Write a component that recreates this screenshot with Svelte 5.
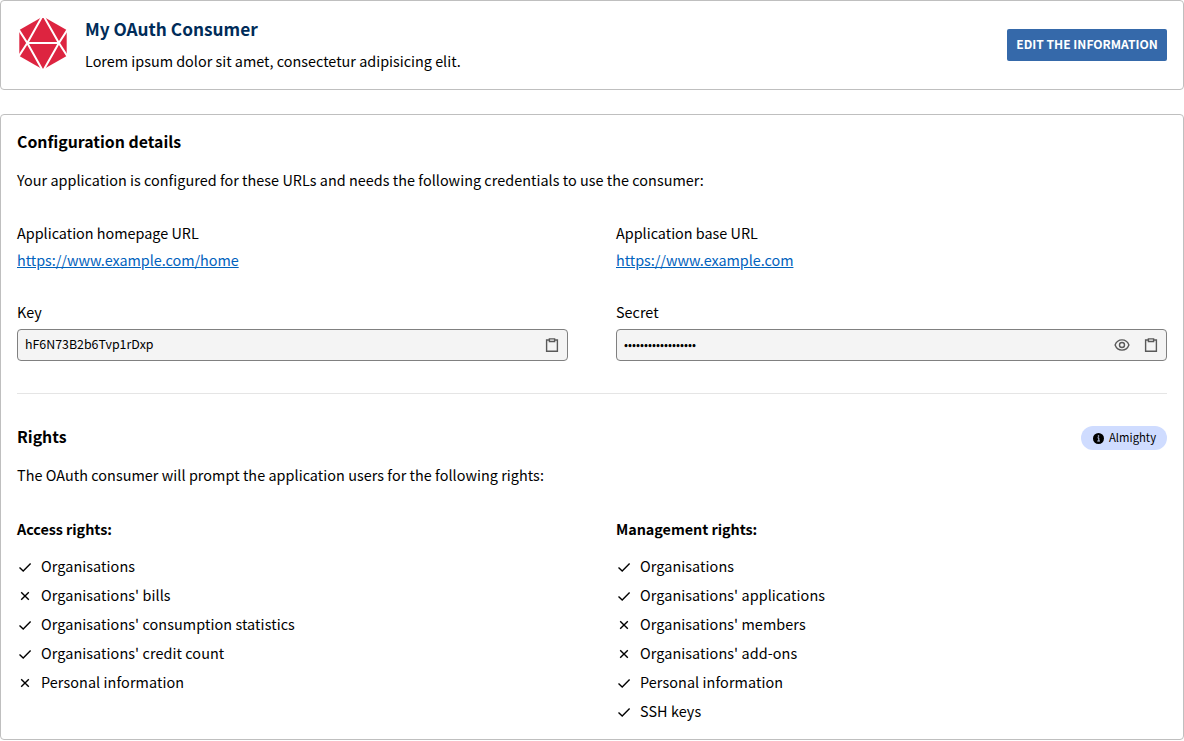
<script>
  const urls = [
    { label: 'Application homepage URL', href: 'https://www.example.com/home' },
    { label: 'Application base URL', href: 'https://www.example.com' },
  ];
  const rights = [
    {
      title: 'Access rights:',
      items: [
        ['Organisations', true],
        ["Organisations' bills", false],
        ["Organisations' consumption statistics", true],
        ["Organisations' credit count", true],
        ['Personal information', false],
      ],
    },
    {
      title: 'Management rights:',
      items: [
        ['Organisations', true],
        ["Organisations' applications", true],
        ["Organisations' members", false],
        ["Organisations' add-ons", false],
        ['Personal information', true],
        ['SSH keys', true],
      ],
    },
  ];
</script>

{#snippet clipboard()}
  <svg class="icon" viewBox="0 0 16 16" fill="none" stroke="#595959" stroke-width="1.4">
    <path d="M5.4 3H2.6v11.3h10.8V3h-2.8" />
    <path d="M5.4 1.9h5.2v2.6H5.4z" />
  </svg>
{/snippet}

<div class="page">
  <header class="card head">
    <svg class="logo" viewBox="0 0 48 52">
      <path fill="#dd2440" d="M24 -.5 47.7 13v26L24 52.5 .3 39V13z" />
      <path fill="none" stroke="#fff" stroke-width="2" d="M24 -2 8.3 26 24 54 39.9 26zM8.3 26h31.6M-1 11.5 8.3 26-1 40.5M49.2 11.5 39.9 26l9.3 14.5" />
    </svg>
    <div class="intro">
      <div class="name">My OAuth Consumer</div>
      <div class="desc">Lorem ipsum dolor sit amet, consectetur adipisicing elit.</div>
    </div>
    <button class="edit">EDIT THE INFORMATION</button>
  </header>

  <main class="card body">
    <h2>Configuration details</h2>
    <p>Your application is configured for these URLs and needs the following credentials to use the consumer:</p>
    <div class="cols urls">
      {#each urls as u}
        <div>
          <div class="line">{u.label}</div>
          <a href={u.href}>{u.href}</a>
        </div>
      {/each}
    </div>
    <div class="cols keys">
      <div>
        <div class="line">Key</div>
        <div class="field">
          <input type="text" readonly value="hF6N73B2b6Tvp1rDxp" aria-label="Key" />
          {@render clipboard()}
        </div>
      </div>
      <div>
        <div class="line">Secret</div>
        <div class="field">
          <input type="password" readonly value="aB3dE6gH9jK2mN5pQ8" aria-label="Secret" />
          <svg class="icon" viewBox="0 0 16 16" fill="none" stroke="#595959" stroke-width="1.4">
            <path d="M1.1 8C2.3 4.8 4.9 2.9 8 2.9S13.7 4.8 14.9 8C13.7 11.2 11.1 13.1 8 13.1S2.3 11.2 1.1 8z" />
            <circle cx="8" cy="8" r="2.5" />
          </svg>
          {@render clipboard()}
        </div>
      </div>
    </div>
    <hr />
    <div class="rhead">
      <h2>Rights</h2>
      <span class="badge">
        <svg viewBox="0 0 12 12">
          <circle cx="6.5" cy="6.5" r="5.5" />
          <path d="M5.5 5.8h1.3v3M5.3 9h2.6" fill="none" stroke="#cfdcff" stroke-width="1" />
          <circle cx="6.5" cy="4" r=".8" fill="#cfdcff" />
        </svg>
        <span class="tag">Almighty</span>
      </span>
    </div>
    <p>The OAuth consumer will prompt the application users for the following rights:</p>
    <div class="cols rights">
      {#each rights as group}
        <div>
          <h3>{group.title}</h3>
          <ul>
            {#each group.items as [label, granted]}
              <li>
                <svg class="icon" viewBox="0 0 16 16" fill="none" stroke="#000" stroke-width="1.4">
                  {#if granted}
                    <path d="M2.5 8.5 6.2 12 13.6 4.6" />
                  {:else}
                    <path d="M4.2 4.2 11.8 11.8M11.8 4.2 4.2 11.8" />
                  {/if}
                </svg>
                {label}
              </li>
            {/each}
          </ul>
        </div>
      {/each}
    </div>
  </main>
</div>

<style>
  :global(body) { background: #fff; }
  .page {
    display: flex; flex-direction: column; gap: 24px;
    font: 14.4px/24px "Noto Sans CJK JP", sans-serif; color: #000;
  }
  .card { box-sizing: border-box; border: 1px solid #bfbfbf; border-radius: 4px; padding: 0 16px; }
  .head { height: 90px; display: flex; align-items: center; }
  .logo { width: 48px; height: 52px; margin: 0 18px 4px 2px; }
  .intro { flex: 1; display: flex; flex-direction: column; gap: 8px; }
  .name { font-size: 17.25px; line-height: 24px; font-weight: 700; color: #002c59; }
  .edit {
    width: 160px; height: 32px; padding: 0 0 4px; border: 0; border-radius: 2px; white-space: nowrap;
    background: #3569aa; color: #fff; font: 700 12.07px "Noto Sans CJK JP", sans-serif;
  }
  .body { height: 626px; padding-top: 15px; }
  h2, h3, p, ul { margin: 0; padding: 0; }
  h2 { font-size: 15.87px; line-height: 24px; }
  h3 { font-size: 14.4px; line-height: 24px; letter-spacing: -.05px; }
  p { margin-top: 14px; letter-spacing: .035px; }
  .cols { display: grid; grid-template-columns: 1fr 1fr; gap: 48px; }
  .urls { margin-top: 29px; }
  a { color: #0062bd; display: block; width: max-content; margin-top: 3px; letter-spacing: -.03px; }
  .keys { margin-top: 28px; }
  .field {
    display: flex; align-items: center; gap: 13px; box-sizing: border-box; height: 32px; margin-top: 5px;
    padding: 0 7px; border: 1px solid #808080; border-radius: 4px; background: #f4f4f4;
  }
  input {
    flex: 1; min-width: 0; border: 0; padding: 0 0 2px; outline: 0; background: none; color: #000;
    font: 12.4px/20px "Noto Sans CJK JP", sans-serif;
  }
  input[type="password"] { font-size: 11.75px; }
  .icon { width: 16px; height: 16px; flex: none; }
  hr { border: 0; border-top: 1px solid #e5e5e5; margin: 32px 0 31px; }
  .rhead { display: flex; justify-content: space-between; align-items: flex-start; height: 25px; }
  .badge {
    display: flex; align-items: center; gap: 5px; box-sizing: border-box; height: 24px; width: 86px;
    padding-left: 11px; margin-top: 1px; border-radius: 12px; background: #cfdcff; font-size: 11.3px;
  }
  .badge svg { width: 12px; height: 12px; }
  .tag { padding-bottom: 2px; }
  .rhead + p { margin-top: 13px; letter-spacing: .045px; }
  .rights { margin-top: 30px; }
  ul { list-style: none; margin-top: 13px; display: grid; gap: 5px; }
  li { display: flex; align-items: center; gap: 8px; letter-spacing: .08px; }
  li .icon { margin-top: 2px; }
</style>
